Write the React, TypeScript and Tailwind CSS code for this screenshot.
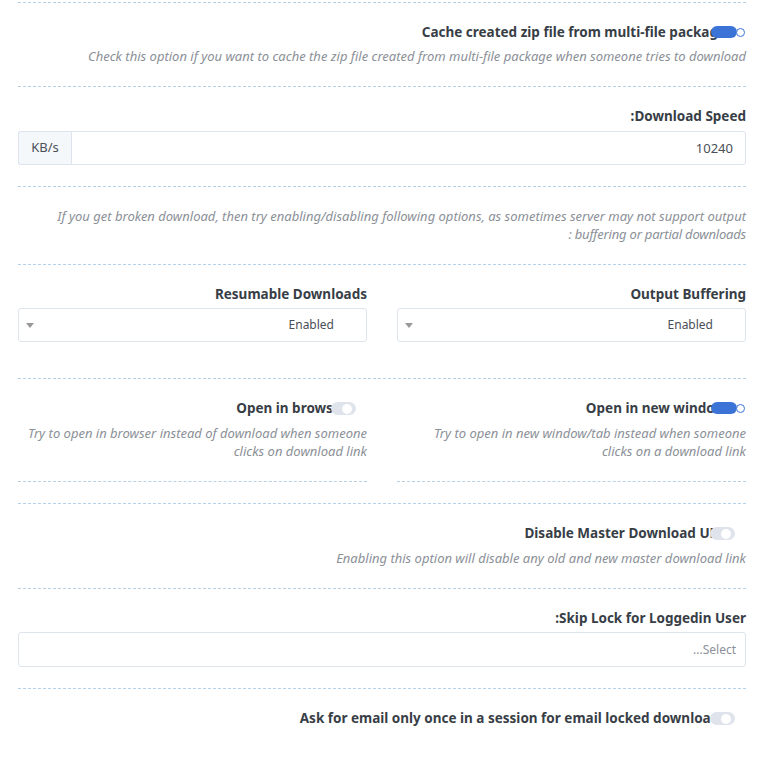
import React from 'react';

const font = { fontFamily: '"Noto Sans", "Open Sans", sans-serif' };
const line = 'border-b border-dashed border-[#b6d1ea]';

function Toggle({ on }: { on: boolean }) {
  if (on) {
    return (
      <span className="absolute right-0 top-[3px] h-[12px] w-[36px]" aria-hidden>
        <span className="absolute right-[9px] top-0 h-[12px] w-[26px] rounded-full bg-[#3b74d6]" />
        <span className="absolute right-[1px] top-[1.5px] h-[9px] w-[9px] rounded-full border-[1.5px] border-[#3b74d6] bg-white" />
      </span>
    );
  }
  return (
    <span className="absolute right-[11px] top-[3px] h-[13px] w-[25px] rounded-full bg-[#dfe4ec]" aria-hidden>
      <span className="absolute right-[4px] top-[1.5px] h-[10px] w-[10px] rounded-full bg-white" />
    </span>
  );
}

function ToggleLabel({ text, on }: { text: string; on: boolean }) {
  return (
    <div className="relative overflow-hidden whitespace-nowrap pr-[20px] text-[13.5px] font-bold leading-[18px] text-[#383e46]">
      <span>{text}</span>
      <Toggle on={on} />
    </div>
  );
}

function Desc({ children, cls = 'mt-[6px]' }: { children: React.ReactNode; cls?: string }) {
  return <div className={`${cls} text-[13px] italic leading-[18px] text-[#8b9097]`}>{children}</div>;
}

function Label({ children, mb = 'mb-[6px]' }: { children: React.ReactNode; mb?: string }) {
  return <div className={`${mb} text-[13.5px] font-bold leading-[18px] text-[#383e46]`}>{children}</div>;
}

function Select({ value }: { value: string }) {
  return (
    <div className="relative flex h-[34px] items-center rounded-[3px] border border-[#dde4ee] bg-white pr-[32px] text-[12px] text-[#4a4f57]">
      <span>{value}</span>
      <span className="absolute left-[7px] top-[14px] h-0 w-0 border-x-[4px] border-t-[5px] border-x-transparent border-t-[#999]" />
    </div>
  );
}

export default function App() {
  return (
    <div dir="rtl" className="min-h-[763px] bg-white pl-[18px] pr-[17px] text-right" style={font}>
      <div className={`h-[3px] ${line}`} />

      <div className={`${line} pt-5 pb-[21px]`}>
        <ToggleLabel text="Cache created zip file from multi-file package" on />
        <Desc>Check this option if you want to cache the zip file created from multi-file package when someone tries to download</Desc>
      </div>

      <div className={`${line} pt-5 pb-[21px]`}>
        <Label>Download Speed:</Label>
        <div className="flex h-[34px] text-[13px]">
          <input
            readOnly
            value="10240"
            className="h-full flex-1 rounded-r-[3px] border border-[#dde4ee] px-3 text-right text-[#4a4f57] outline-none"
          />
          <span className="flex w-[53px] items-center justify-center rounded-l-[3px] border border-r-0 border-[#dde4ee] bg-[#f5f8fb] text-[#4a4f57]">
            KB/s
          </span>
        </div>
      </div>

      <div className={`${line} pt-5 pb-[21px]`}>
        <div className="whitespace-nowrap text-[13px] italic leading-[18px] text-[#8b9097]">
          If you get broken download, then try enabling/disabling following options, as sometimes server may not support output
          <br />
          <span className="tracking-[-0.2px]">buffering or partial downloads :</span>
        </div>
      </div>

      <div className={`${line} pt-5 pb-[36px]`}>
        <div className="grid grid-cols-2 gap-[30px]">
          <div>
            <Label mb="mb-[5px]">Output Buffering</Label>
            <Select value="Enabled" />
          </div>
          <div>
            <Label mb="mb-[5px]">Resumable Downloads</Label>
            <Select value="Enabled" />
          </div>
        </div>
      </div>

      <div className={`${line} pt-5 pb-[21px]`}>
        <div className="grid grid-cols-2 gap-[30px]">
          <div className={`${line} pb-[21px]`}>
            <ToggleLabel text="Open in new window" on />
            <Desc cls="mt-[7px] pl-[14px]">Try to open in new window/tab instead when someone clicks on a download link</Desc>
          </div>
          <div className={`${line} pb-[21px]`}>
            <ToggleLabel text="Open in browser" on={false} />
            <Desc cls="mt-[7px]">Try to open in browser instead of download when someone clicks on download link</Desc>
          </div>
        </div>
      </div>

      <div className={`${line} pt-5 pb-[21px]`}>
        <ToggleLabel text="Disable Master Download URL" on={false} />
        <Desc cls="mt-[7px]">Enabling this option will disable any old and new master download link</Desc>
      </div>

      <div className={`${line} pt-5 pb-[21px]`}>
        <Label mb="mb-[5px]">Skip Lock for Loggedin User:</Label>
        <div className="flex h-[35px] items-center rounded-[3px] border border-[#dde4ee] pr-[9px] text-[12px] text-[#8b9097]">
          Select...
        </div>
      </div>

      <div className="pt-5">
        <ToggleLabel text="Ask for email only once in a session for email locked downloads" on={false} />
      </div>
    </div>
  );
}
